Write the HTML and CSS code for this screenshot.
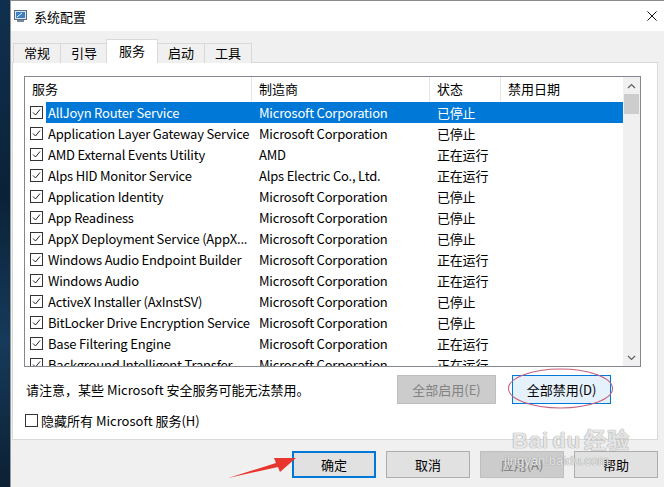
FILE: index.html
```html
<!DOCTYPE html>
<html lang="zh-CN">

<head>
    <meta charset="UTF-8">
    <title>系统配置</title>
    <link rel="stylesheet" href="styles.css">
</head>

<body>
    <div class="screen">
        <div class="desktop"></div>

        <div class="window">
            <header class="titlebar">
                <svg class="app-icon" width="13" height="13" viewBox="0 0 13 13">
                    <rect x="0.5" y="0.5" width="12" height="9" fill="#d8e4f0" stroke="#5a6b80"/>
                    <rect x="2" y="2" width="9" height="6" fill="#3f7fc4"/>
                    <path d="M3 7 L8 3" stroke="#e8f2ff" stroke-width="1"/>
                    <rect x="3" y="10" width="7" height="2" fill="#7a8898"/>
                </svg>
                <span class="title">系统配置</span>
                <svg class="close" width="10" height="10" viewBox="0 0 10 10">
                    <path d="M0.5 0.5 L9.5 9.5 M9.5 0.5 L0.5 9.5" stroke="#111" stroke-width="1"/>
                </svg>
            </header>

            <div class="client">
                <nav class="tabs">
                    <span class="tab">常规</span>
                    <span class="tab">引导</span>
                    <span class="tab active">服务</span>
                    <span class="tab">启动</span>
                    <span class="tab">工具</span>
                </nav>

                <section class="panel">
                    <div class="listbox">
                        <div class="list-main">
                            <div class="list-head">
                                <span class="head-cell">服务</span>
                                <span class="head-cell">制造商</span>
                                <span class="head-cell">状态</span>
                                <span class="head-cell">禁用日期</span>
                            </div>
                            <div class="list-rows" id="rows"></div>
                        </div>
                        <div class="scrollbar">
                            <span class="arrow">
                                <svg width="9" height="6" viewBox="0 0 9 6"><path d="M1 5 L4.5 1.5 L8 5" fill="none" stroke="#606060" stroke-width="1.2"/></svg>
                            </span>
                            <span class="thumb"></span>
                            <span class="track"></span>
                            <span class="arrow">
                                <svg width="9" height="6" viewBox="0 0 9 6"><path d="M1 1 L4.5 4.5 L8 1" fill="none" stroke="#606060" stroke-width="1.2"/></svg>
                            </span>
                        </div>
                    </div>

                    <div class="note-row">
                        <p class="note">请注意，某些 Microsoft 安全服务可能无法禁用。</p>
                        <div class="panel-buttons">
                            <button class="btn disabled">全部启用(E)</button>
                            <button class="btn hot">全部禁用(D)</button>
                        </div>
                    </div>

                    <label class="hide-ms">
                        <span class="box"></span>
                        隐藏所有 Microsoft 服务(H)
                    </label>
                </section>

                <div class="dialog-buttons">
                    <button class="btn default">确定</button>
                    <button class="btn">取消</button>
                    <button class="btn disabled">应用(A)</button>
                    <button class="btn">帮助</button>
                </div>
            </div>
        </div>

        <!-- annotations drawn over the screenshot -->
        <svg class="marks" width="664" height="487" viewBox="0 0 664 487">
            <ellipse cx="560.5" cy="388.5" rx="52" ry="19.5" fill="none" stroke="#c4607e" stroke-width="1.1"/>
            <polygon points="228,478 276,463 274,458 296,458 280,472 278,467" fill="#e8352d"/>
        </svg>
        <div class="watermark">
            <div class="wm-logo">Bai<span class="paw">du</span>经验</div>
            <div class="wm-url">jingyan.baidu.com</div>
        </div>
    </div>

    <script>
        const services = [
            ["AllJoyn Router Service", "Microsoft Corporation", "已停止"],
            ["Application Layer Gateway Service", "Microsoft Corporation", "已停止"],
            ["AMD External Events Utility", "AMD", "正在运行"],
            ["Alps HID Monitor Service", "Alps Electric Co., Ltd.", "正在运行"],
            ["Application Identity", "Microsoft Corporation", "已停止"],
            ["App Readiness", "Microsoft Corporation", "已停止"],
            ["AppX Deployment Service (AppX...", "Microsoft Corporation", "已停止"],
            ["Windows Audio Endpoint Builder", "Microsoft Corporation", "正在运行"],
            ["Windows Audio", "Microsoft Corporation", "正在运行"],
            ["ActiveX Installer (AxInstSV)", "Microsoft Corporation", "已停止"],
            ["BitLocker Drive Encryption Service", "Microsoft Corporation", "已停止"],
            ["Base Filtering Engine", "Microsoft Corporation", "正在运行"],
            ["Background Intelligent Transfer...", "Microsoft Corporation", "正在运行"]
        ];

        const rows = document.querySelector('#rows');
        const tick = '<svg width="11" height="11" viewBox="0 0 11 11"><path d="M2 5.5 L4.5 8 L9 2.5" fill="none" stroke="#222" stroke-width="1"/></svg>';

        services.forEach(function (item, i) {
            const row = document.createElement('div');
            row.className = 'row' + (i === 0 ? ' selected' : '');
            row.innerHTML =
                '<span class="check">' + tick + '</span>' +
                '<span class="cells">' +
                '<span class="cell name">' + item[0] + '</span>' +
                '<span class="cell">' + item[1] + '</span>' +
                '<span class="cell">' + item[2] + '</span>' +
                '<span class="cell"></span>' +
                '</span>';
            rows.appendChild(row);
        });
    </script>
</body>

</html>
```

FILE: styles.css
```css
* {
    box-sizing: border-box;
    margin: 0;
    padding: 0;
}

body {
    background: #0d2a45;
    font-family: "Noto Sans CJK SC", "Noto Sans", sans-serif;
    font-size: 13px;
    color: #000;
}

.screen {
    display: flex;
    height: 487px;
    overflow: hidden;
    position: relative;
    width: 664px;
}

.desktop {
    background: linear-gradient(180deg, #10304f, #0a2238 40%, #163a5a 70%, #0b2033);
    flex: 0 0 10px;
}

.window {
    background: #f0f0f0;
    border-left: 1px solid #9a9a9a;
    border-top: 1px solid #8a8a8a;
    display: flex;
    flex: 1;
    flex-direction: column;
}

.titlebar {
    align-items: center;
    background: #fff;
    display: flex;
    flex: 0 0 30px;
    padding: 0 6px 0 3px;
}

.app-icon {
    margin-right: 7px;
}

.title {
    flex: 1;
    font-size: 13px;
}

.close {
    margin-right: 1px;
}

.client {
    display: flex;
    flex-direction: column;
    padding: 9px 6px 0 1px;
}

/* tabs */

.tabs {
    align-items: flex-end;
    display: flex;
    height: 23px;
    margin-bottom: -1px;
    padding-left: 1px;
    position: relative;
    z-index: 1;
}

.tab {
    background: #f0f0f0;
    border: 1px solid #d9d9d9;
    border-bottom: none;
    height: 20px;
    line-height: 18px;
    margin-right: -1px;
    padding: 0 10px;
}

.tab.active {
    background: #fff;
    height: 24px;
    line-height: 21px;
    margin: 0 -1px 0 -1px;
    padding: 0 12px;
    position: relative;
}

.panel {
    background: #fff;
    border: 1px solid #d9d9d9;
    display: flex;
    flex-direction: column;
    height: 378px;
    padding: 13px 16px 0 11px;
}

/* service list */

.listbox {
    border: 1px solid #828790;
    display: flex;
    height: 291px;
    overflow: hidden;
}

.list-main {
    flex: 1;
    overflow: hidden;
}

.list-head {
    display: grid;
    grid-template-columns: 227px 178px 71px 1fr;
    height: 25px;
}

.head-cell {
    border-right: 1px solid #e5e5e5;
    line-height: 24px;
    padding-left: 7px;
}

.head-cell:last-child {
    border-right: none;
}

.row {
    display: flex;
    height: 21px;
}

.check {
    align-items: center;
    display: flex;
    flex: 0 0 21px;
    padding-left: 5px;
}

.check svg {
    background: #fff;
    border: 1px solid #333;
    box-sizing: content-box;
}

.cells {
    display: grid;
    flex: 1;
    grid-template-columns: 206px 178px 71px 1fr;
    letter-spacing: -0.2px;
    line-height: 21px;
}

.cell {
    padding-left: 7px;
    white-space: nowrap;
}

.cell.name {
    padding-left: 2px;
}

.row.selected .cells {
    background: #0078d7;
    color: #fff;
}

.scrollbar {
    background: #f0f0f0;
    display: flex;
    flex: 0 0 17px;
    flex-direction: column;
}

.arrow {
    align-items: center;
    display: flex;
    flex: 0 0 17px;
    justify-content: center;
}

.thumb {
    background: #cdcdcd;
    flex: 0 0 20px;
    margin: 0 1px;
}

.track {
    flex: 1;
}

/* under the list */

.note-row {
    align-items: center;
    display: flex;
    justify-content: space-between;
    margin-top: 8px;
}

.note {
    padding-left: 2px;
}

.panel-buttons {
    display: flex;
    gap: 16px;
    margin-right: 30px;
}

.btn {
    background: #e1e1e1;
    border: 1px solid #adadad;
    color: #000;
    font-family: inherit;
    font-size: 13px;
    height: 29px;
    width: 99px;
}

.btn.disabled {
    background: #cccccc;
    border-color: #bfbfbf;
    color: #838383;
}

.btn.hot {
    background: #e5f1fb;
    border-color: #0078d7;
}

.hide-ms {
    align-items: center;
    display: flex;
    gap: 3px;
    margin-top: 7px;
    padding-left: 1px;
}

.box {
    background: #fff;
    border: 1px solid #333;
    height: 13px;
    width: 13px;
}

.dialog-buttons {
    display: flex;
    gap: 10px;
    justify-content: flex-end;
    margin-top: 11px;
}

.dialog-buttons .btn {
    height: 27px;
    width: 84px;
}

.btn.default {
    border: 2px solid #0078d7;
}

/* overlays */

.marks {
    left: 0;
    pointer-events: none;
    position: absolute;
    top: 0;
}

.watermark {
    color: rgba(255, 255, 255, 0.75);
    left: 512px;
    pointer-events: none;
    position: absolute;
    text-shadow: 0 0 1px #9a9a9a, 0 0 1px #9a9a9a;
    top: 429px;
}

.wm-logo {
    font-family: "Liberation Sans", sans-serif;
    font-size: 22px;
    font-weight: bold;
    letter-spacing: 1px;
    line-height: 24px;
}

.paw {
    margin: 0 3px;
}

.wm-url {
    font-family: "Liberation Sans", sans-serif;
    font-size: 13px;
    line-height: 16px;
    margin-left: -8px;
}
```
